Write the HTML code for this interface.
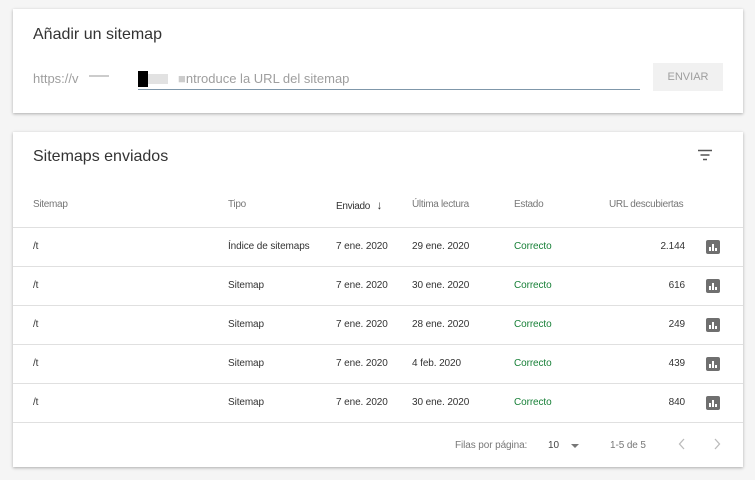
<!DOCTYPE html>
<html><head><meta charset="utf-8">
<style>
*{margin:0;padding:0;box-sizing:border-box}
body{width:755px;height:480px;background:#f5f5f5;font-family:"Liberation Sans",Arial,sans-serif;position:relative;overflow:hidden;color:#333}
.card{position:absolute;left:13px;width:730px;background:#fff;box-shadow:0 1px 3px rgba(0,0,0,.3)}
.abs{position:absolute;white-space:nowrap}
.h{font-size:16px;color:#333}
.s{font-size:10px;color:#333;letter-spacing:-0.1px}
.g{color:#777}
.hd{letter-spacing:-0.3px}
.line{position:absolute;left:0;width:730px;height:1px;background:#e0e0e0}
.ok{color:#188038}
.ic{position:absolute;left:693px;width:14px;height:14px;background:#6f6f6f;border-radius:2px}
.ic i{position:absolute;bottom:3px;width:2px;background:#fff}
</style></head><body>
<div class="card" style="top:9px;height:104px">
  <div class="abs h" style="left:20px;top:17px">Añadir un sitemap</div>
  <div class="abs g" style="left:20px;top:62px;font-size:13px;color:#9e9e9e">https://v</div>
  <div class="abs" style="left:76px;top:66px;width:20px;height:2px;background:#ccc"></div>
  <div class="abs" style="left:125px;top:62px;width:10px;height:16px;background:#000"></div>
  <div class="abs" style="left:135px;top:65px;width:20px;height:10px;background:#e2e2e2"></div>
  <div class="abs" style="left:165px;top:62px;font-size:13px;color:#9e9e9e"><span style="color:#ccc">■</span>ntroduce la URL del sitemap</div>
  <div class="abs" style="left:125px;top:80px;width:502px;height:1px;background:#7f97aa"></div>
  <div class="abs" style="left:640px;top:54px;width:70px;height:28px;background:#f1f1f1;color:#9e9e9e;font-size:11px;text-align:center;line-height:28px">ENVIAR</div>
</div>
<div class="card" style="top:132px;height:335px">
  <div class="abs h" style="left:20px;top:16px">Sitemaps enviados</div>
  <svg class="abs" style="left:684px;top:17px" width="16" height="12"><path d="M1 1.5h14M3.5 6h9M6 10.5h4" stroke="#555" stroke-width="1.4"/></svg>
  <div class="abs s g hd" style="left:20px;top:67px">Sitemap</div>
  <div class="abs s g hd" style="left:215px;top:67px">Tipo</div>
  <div class="abs s hd" style="left:323px;top:66px">Enviado <span style="font-size:12px;margin-left:4px">&#8595;</span></div>
  <div class="abs s g hd" style="left:399px;top:67px">Última lectura</div>
  <div class="abs s g hd" style="left:501px;top:67px">Estado</div>
  <div class="abs s g hd" style="left:596px;top:67px">URL descubiertas</div>
  <div class="line" style="top:95px"></div>

  <div class="abs s" style="left:20px;top:109px">/t</div><div class="abs s" style="left:215px;top:109px">Índice de sitemaps</div><div class="abs s" style="left:323px;top:109px">7 ene. 2020</div><div class="abs s" style="left:399px;top:109px">29 ene. 2020</div><div class="abs s ok" style="left:501px;top:109px">Correcto</div><div class="abs s" style="right:58px;top:109px">2.144</div>
  <div class="ic" style="top:108px"><i style="left:3px;height:4px"></i><i style="left:6px;height:7px"></i><i style="left:9px;height:3px"></i></div>
  <div class="line" style="top:134px"></div>

  <div class="abs s" style="left:20px;top:148px">/t</div><div class="abs s" style="left:215px;top:148px">Sitemap</div><div class="abs s" style="left:323px;top:148px">7 ene. 2020</div><div class="abs s" style="left:399px;top:148px">30 ene. 2020</div><div class="abs s ok" style="left:501px;top:148px">Correcto</div><div class="abs s" style="right:58px;top:148px">616</div>
  <div class="ic" style="top:147px"><i style="left:3px;height:4px"></i><i style="left:6px;height:7px"></i><i style="left:9px;height:3px"></i></div>
  <div class="line" style="top:173px"></div>

  <div class="abs s" style="left:20px;top:187px">/t</div><div class="abs s" style="left:215px;top:187px">Sitemap</div><div class="abs s" style="left:323px;top:187px">7 ene. 2020</div><div class="abs s" style="left:399px;top:187px">28 ene. 2020</div><div class="abs s ok" style="left:501px;top:187px">Correcto</div><div class="abs s" style="right:58px;top:187px">249</div>
  <div class="ic" style="top:186px"><i style="left:3px;height:4px"></i><i style="left:6px;height:7px"></i><i style="left:9px;height:3px"></i></div>
  <div class="line" style="top:212px"></div>

  <div class="abs s" style="left:20px;top:226px">/t</div><div class="abs s" style="left:215px;top:226px">Sitemap</div><div class="abs s" style="left:323px;top:226px">7 ene. 2020</div><div class="abs s" style="left:399px;top:226px">4 feb. 2020</div><div class="abs s ok" style="left:501px;top:226px">Correcto</div><div class="abs s" style="right:58px;top:226px">439</div>
  <div class="ic" style="top:225px"><i style="left:3px;height:4px"></i><i style="left:6px;height:7px"></i><i style="left:9px;height:3px"></i></div>
  <div class="line" style="top:251px"></div>

  <div class="abs s" style="left:20px;top:265px">/t</div><div class="abs s" style="left:215px;top:265px">Sitemap</div><div class="abs s" style="left:323px;top:265px">7 ene. 2020</div><div class="abs s" style="left:399px;top:265px">30 ene. 2020</div><div class="abs s ok" style="left:501px;top:265px">Correcto</div><div class="abs s" style="right:58px;top:265px">840</div>
  <div class="ic" style="top:264px"><i style="left:3px;height:4px"></i><i style="left:6px;height:7px"></i><i style="left:9px;height:3px"></i></div>
  <div class="line" style="top:290px"></div>

  <div class="abs s g" style="left:442px;top:308px">Filas por página:</div>
  <div class="abs s" style="left:535px;top:308px;color:#444">10</div>
  <svg class="abs" style="left:557px;top:311px" width="10" height="6"><path d="M1 1h8L5 5z" fill="#777"/></svg>
  <div class="abs s g" style="left:597px;top:308px">1-5 de 5</div>
  <svg class="abs" style="left:665px;top:306px" width="8" height="12"><path d="M6 1L1.5 6L6 11" stroke="#bbb" stroke-width="1.3" fill="none"/></svg>
  <svg class="abs" style="left:700px;top:306px" width="8" height="12"><path d="M2 1L6.5 6L2 11" stroke="#bbb" stroke-width="1.3" fill="none"/></svg>
</div>
</body></html>
